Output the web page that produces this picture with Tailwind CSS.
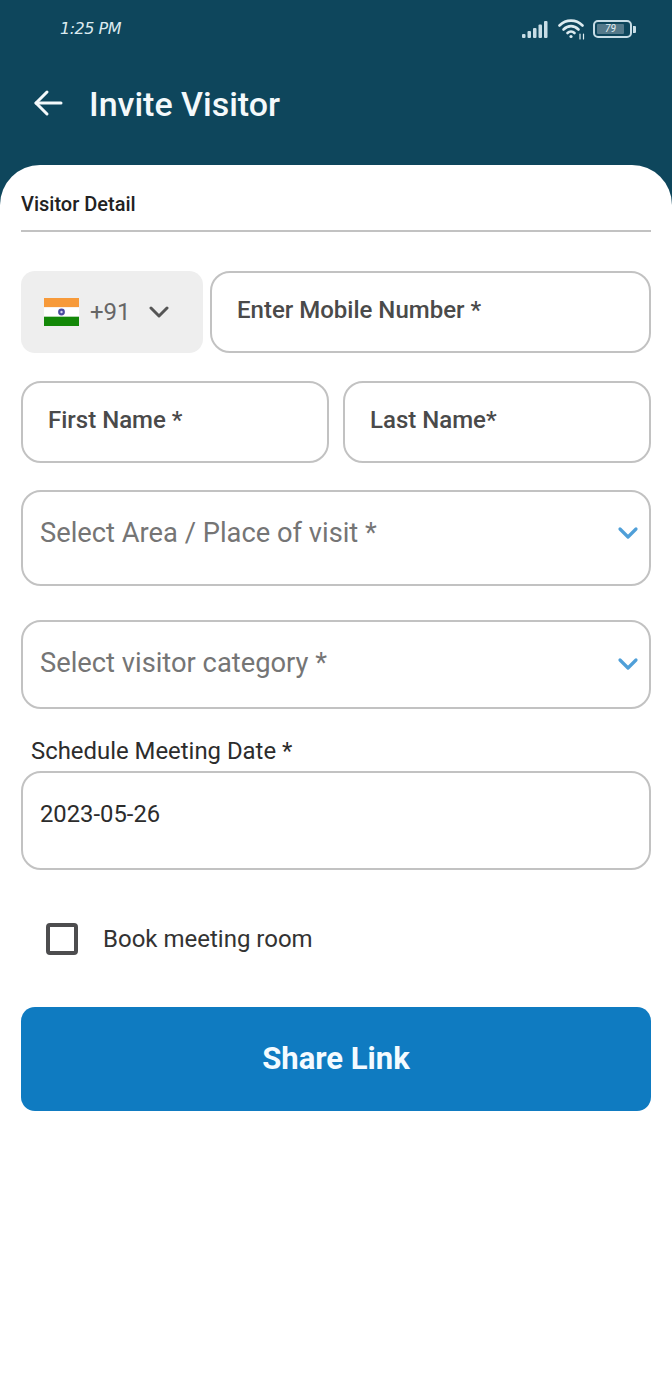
<!DOCTYPE html>
<html lang="en">
<head>
    <meta charset="UTF-8">
    <meta name="viewport" content="width=device-width, initial-scale=1.0">
    <title>Invite Visitor</title>
    <script src="https://cdn.jsdelivr.net/npm/@tailwindcss/browser@4"></script>
</head>
<body class="bg-white font-['Roboto',sans-serif]">
    <div class="w-[672px] h-[1398px] bg-[#0e465c] overflow-hidden flex flex-col">
        <!-- Status bar -->
        <div class="h-[58px] flex items-center justify-between pl-[60px] pr-[36px] text-[#dcebf0]">
            <span class="text-[16px] italic font-['DejaVu_Sans',sans-serif] tracking-[-0.5px] font-light">1:25 PM</span>
            <div class="flex items-center">
                <svg width="26" height="18" viewBox="0 0 26 18" fill="#c8dde6">
                    <rect x="0" y="14" width="3.5" height="4" rx="1"/>
                    <rect x="5.5" y="11" width="3.5" height="7" rx="1"/>
                    <rect x="11" y="8" width="3.5" height="10" rx="1"/>
                    <rect x="16.5" y="4.5" width="3.5" height="13.5" rx="1"/>
                    <rect x="22" y="1" width="3.5" height="17" rx="1"/>
                </svg>
                <svg class="ml-[10px]" width="28" height="22" viewBox="0 0 28 22" fill="none" stroke="#dcebf0" stroke-width="2.6" stroke-linecap="round">
                    <path d="M1.5 7.5C8 1 18 1 24.5 7.5"/>
                    <path d="M5.5 11.5C10 7 16 7 20.5 11.5"/>
                    <path d="M9.5 15C11.5 13 14.5 13 16.5 15"/>
                    <circle cx="13" cy="18.5" r="1.6" fill="#dcebf0" stroke="none"/>
                    <path d="M22 16v5M25.5 16v5" stroke-width="1.2"/>
                </svg>
                <div class="ml-[7px] flex items-center gap-[1px]">
                    <div class="w-[39px] h-[18px] border-2 border-[#c8dde6] rounded-[5px] p-[2px] flex">
                        <div class="w-[27px] h-full bg-[#54798a] rounded-[1px] flex items-center justify-center text-[10px] leading-none italic text-[#e4f0f4]">79</div>
                    </div>
                    <div class="w-[3px] h-[7px] bg-[#c8dde6] rounded-r-[1px]"></div>
                </div>
            </div>
        </div>

        <!-- Header -->
        <div class="h-[107px] flex items-start pl-[33px] pt-[25px] text-white">
            <svg class="mt-[6px]" width="30" height="28" viewBox="0 0 30 28" fill="none" stroke="#f4f9fb" stroke-width="3" stroke-linecap="round" stroke-linejoin="round">
                <path d="M3 14H28"/>
                <path d="M14 3L3 14L14 25"/>
            </svg>
            <h1 class="ml-[26px] text-[34px] leading-[42px] font-medium text-[#f4f9fb]">Invite Visitor</h1>
        </div>

        <!-- Form card -->
        <div class="flex-1 bg-white rounded-t-[40px] px-[21px] pt-[26px]">
            <div class="text-[20px] leading-[26px] font-medium text-[#222] pb-[13px] border-b-2 border-[#c2c2c2]">Visitor Detail</div>

            <div class="flex gap-[7px] mt-[39px]">
                <div class="w-[182px] h-[82px] shrink-0 bg-[#eeeeee] rounded-[14px] flex items-center pl-[23px]">
                    <svg width="35" height="28" viewBox="0 0 35 28">
                        <rect width="35" height="9.3" fill="#f79a3a"/>
                        <rect y="9.3" width="35" height="9.4" fill="#ffffff"/>
                        <rect y="18.7" width="35" height="9.3" fill="#138808"/>
                        <circle cx="17.5" cy="14" r="3.4" fill="#4a4a9e"/>
                        <circle cx="17.5" cy="14" r="1.2" fill="#d8d8f0"/>
                    </svg>
                    <span class="ml-[11px] text-[24px] text-[#666]">+91</span>
                    <svg class="ml-[18px]" width="20" height="14" viewBox="0 0 20 14" fill="none" stroke="#555" stroke-width="3" stroke-linecap="round" stroke-linejoin="round">
                        <path d="M2 3L10 11L18 3"/>
                    </svg>
                </div>
                <div class="flex-1 h-[82px] border-2 border-[#c2c2c2] rounded-[20px] flex items-center pl-[25px] pb-[5px] text-[24px] font-medium text-[#4a4a4a]">Enter Mobile Number *</div>
            </div>

            <div class="flex gap-[14px] mt-[28px]">
                <div class="flex-1 h-[82px] border-2 border-[#c2c2c2] rounded-[20px] flex items-center pl-[25px] pb-[5px] text-[24px] font-medium text-[#4a4a4a]">First Name *</div>
                <div class="flex-1 h-[82px] border-2 border-[#c2c2c2] rounded-[20px] flex items-center pl-[25px] pb-[5px] text-[24px] font-medium text-[#4a4a4a]">Last Name*</div>
            </div>

            <div class="mt-[27px] h-[96px] border-2 border-[#c2c2c2] rounded-[20px] flex items-center justify-between pl-[17px] pr-[10px] pb-[10px] text-[27.3px] text-[#757575]">
                <span>Select Area / Place of visit *</span>
                <svg width="22" height="14" viewBox="0 0 22 14" fill="none" stroke="#4f9fd8" stroke-width="3.2" stroke-linecap="round" stroke-linejoin="round">
                    <path d="M3 3L11 11L19 3"/>
                </svg>
            </div>

            <div class="mt-[34px] h-[89px] border-2 border-[#c2c2c2] rounded-[20px] flex items-center justify-between pl-[17px] pr-[10px] pb-[2px] text-[27.3px] text-[#757575]">
                <span>Select visitor category *</span>
                <svg width="22" height="14" viewBox="0 0 22 14" fill="none" stroke="#4f9fd8" stroke-width="3.2" stroke-linecap="round" stroke-linejoin="round">
                    <path d="M3 3L11 11L19 3"/>
                </svg>
            </div>

            <div class="mt-[26px] pl-[10px] text-[23.9px] leading-[32px] text-[#2c2c2c]">Schedule Meeting Date *</div>
            <div class="mt-[4px] h-[99px] border-2 border-[#c2c2c2] rounded-[20px] flex items-center pl-[17px] pb-[12px] text-[23.8px] text-[#2c2c2c]">2023-05-26</div>

            <div class="mt-[51px] flex items-center pl-[25px]">
                <div class="w-[32px] h-[32px] border-[4px] border-[#4d4d4f] rounded-[4px]"></div>
                <span class="ml-[25px] text-[24px] text-[#333]">Book meeting room</span>
            </div>

            <button class="mt-[50px] w-full h-[104px] bg-[#0f7bc1] rounded-[14px] text-[31px] font-bold text-[#f4fbff]">Share Link</button>
        </div>
    </div>
</body>
</html>
